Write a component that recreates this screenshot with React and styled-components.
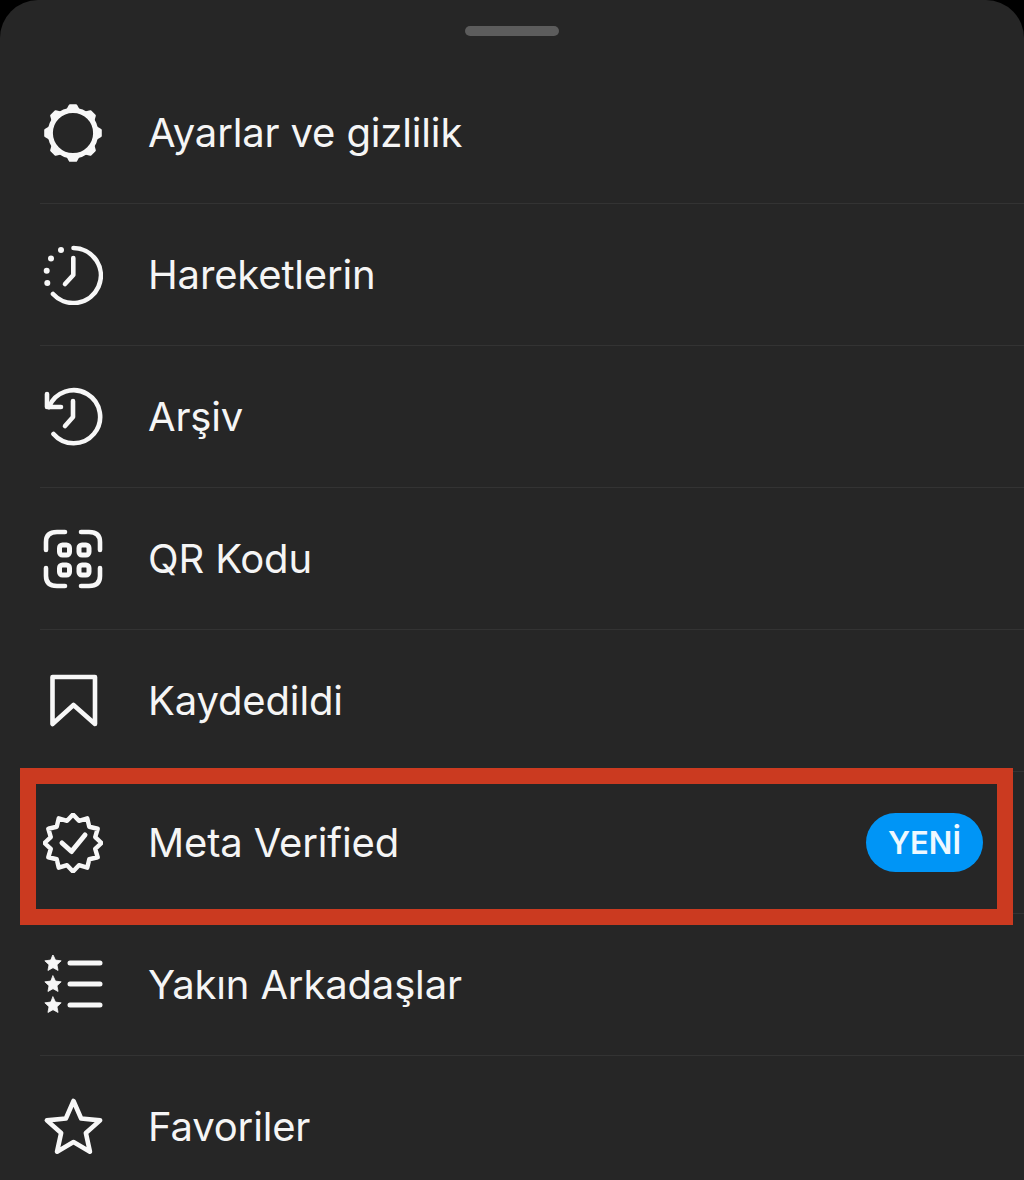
import React from 'react';
import styled, { createGlobalStyle } from 'styled-components';

const GlobalStyle = createGlobalStyle`
  html, body {
    margin: 0;
    padding: 0;
    background: #000;
    overflow: hidden;
  }
`;

const Sheet = styled.div`
  height: 1180px;
  overflow: hidden;
  box-sizing: border-box;
  padding-top: 26px;
  background: #262626;
  border-radius: 38px 38px 0 0;
  font-family: Inter, "Liberation Sans", sans-serif;
`;

const Handle = styled.div`
  width: 94px;
  height: 10px;
  margin: 0 auto 26px;
  border-radius: 5px;
  background: #5c5c5c;
`;

const List = styled.div`
  display: flex;
  flex-direction: column;
  padding-left: 40px;
`;

const Row = styled.div`
  position: relative;
  display: flex;
  align-items: center;
  gap: 45px;
  height: 142px;
  box-sizing: border-box;
  padding: 0 41px 0 3px;
  border-bottom: 1px solid #333;
`;

const Label = styled.span`
  flex: 1;
  color: #f5f5f5;
  font-size: 40px;
  font-weight: 400;
  letter-spacing: -0.15px;
`;

const Badge = styled.span`
  display: flex;
  align-items: center;
  justify-content: center;
  width: 117px;
  height: 59px;
  border-radius: 30px;
  background: #0095f6;
  color: #eef8ff;
  font-size: 31px;
  font-weight: 600;
`;

const Highlight = styled.div`
  position: absolute;
  top: -4px;
  right: 11px;
  bottom: -12px;
  left: -20px;
  border: 16px solid #cb3a20;
`;

const Icon = styled.svg.attrs({ viewBox: '0 0 60 60' })`
  flex: none;
  width: 60px;
  height: 60px;
  fill: none;
  stroke: #f7f7f7;
  stroke-width: 4.6;
  stroke-linecap: round;
  stroke-linejoin: round;
`;

const Filled = styled.path`
  fill: #f7f7f7;
  stroke: #f7f7f7;
  stroke-width: 0.8;
`;

const Tooth = styled.path`
  fill: #f7f7f7;
  stroke: #f7f7f7;
  stroke-width: 2.4;
`;

// alternating outer/inner points, first point straight up
const ring = (cx, cy, outer, inner, count) => {
  const points = [];
  for (let i = 0; i < count * 2; i++) {
    const radius = i % 2 ? inner : outer;
    const angle = (Math.PI * i) / count - Math.PI / 2;
    points.push(`${(cx + radius * Math.cos(angle)).toFixed(2)} ${(cy + radius * Math.sin(angle)).toFixed(2)}`);
  }
  return `M${points.join('L')}Z`;
};

const GearIcon = () => (
  <Icon>
    <circle cx="30" cy="30" r="22.7" strokeWidth="5.2" />
    {[0, 45, 90, 135, 180, 225, 270, 315].map((deg) => (
      <Tooth key={deg} d="M24.4 7L27 2.4H33L35.6 7Z" transform={`rotate(${deg} 30 30)`} />
    ))}
  </Icon>
);

const ActivityIcon = () => (
  <Icon>
    <path d="M30.5 3A27.5 27.5 0 1 1 10 49" />
    <path d="M30.3 13V30L22 39" />
    <g stroke="none" fill="#f7f7f7">
      <circle cx="18" cy="5" r="3" />
      <circle cx="8" cy="13.5" r="3" />
      <circle cx="3.7" cy="25.7" r="3" />
      <circle cx="4.3" cy="38" r="3" />
    </g>
  </Icon>
);

const ArchiveIcon = () => (
  <Icon>
    <path d="M6 20A26.5 26.5 0 1 1 10.5 47" />
    <path d="M4 7V20H18" />
    <path d="M30 14V30L22 39" />
  </Icon>
);

const QrIcon = () => (
  <Icon>
    <path d="M3 21V13Q3 3 14 3H22" />
    <path d="M38 3H46Q57 3 57 13V21" />
    <path d="M3 39V47Q3 57 14 57H22" />
    <path d="M38 57H46Q57 57 57 47V39" />
    <rect x="16.5" y="16" width="10" height="10" rx="3" strokeWidth="5" />
    <rect x="36" y="16" width="10" height="10" rx="3" strokeWidth="5" />
    <rect x="16.5" y="36" width="10" height="10" rx="3" strokeWidth="5" />
    <rect x="36" y="36" width="10" height="10" rx="3" strokeWidth="5" />
  </Icon>
);

const BookmarkIcon = () => (
  <Icon>
    <path d="M9.5 6H52V53L30.5 34L9.5 53Z" />
  </Icon>
);

const VerifiedIcon = () => (
  <Icon>
    <path d={ring(30, 30, 28.5, 23, 12)} strokeWidth="4.4" />
    <path d="M19 30L28.5 38.5L42 22" strokeWidth="5" />
  </Icon>
);

const FriendsIcon = () => (
  <Icon>
    <Filled d={ring(10, 8.5, 8.6, 4.2, 5)} />
    <Filled d={ring(10, 29.5, 8.6, 4.2, 5)} />
    <Filled d={ring(10, 50.5, 8.6, 4.2, 5)} />
    <path d="M27 8H57M27 29H57M27 50H57" strokeWidth="5" />
  </Icon>
);

const StarIcon = () => (
  <Icon>
    <path d={ring(30.5, 32, 28, 13, 5)} />
  </Icon>
);

const items = [
  { label: 'Ayarlar ve gizlilik', icon: GearIcon },
  { label: 'Hareketlerin', icon: ActivityIcon },
  { label: 'Arşiv', icon: ArchiveIcon },
  { label: 'QR Kodu', icon: QrIcon },
  { label: 'Kaydedildi', icon: BookmarkIcon },
  { label: 'Meta Verified', icon: VerifiedIcon, badge: 'YENİ', marked: true },
  { label: 'Yakın Arkadaşlar', icon: FriendsIcon },
  { label: 'Favoriler', icon: StarIcon },
];

export default function App() {
  return (
    <>
      <GlobalStyle />
      <Sheet>
        <Handle />
        <List>
          {items.map(({ label, icon: ItemIcon, badge, marked }) => (
            <Row key={label}>
              <ItemIcon />
              <Label>{label}</Label>
              {badge && <Badge>{badge}</Badge>}
              {marked && <Highlight />}
            </Row>
          ))}
        </List>
      </Sheet>
    </>
  );
}
